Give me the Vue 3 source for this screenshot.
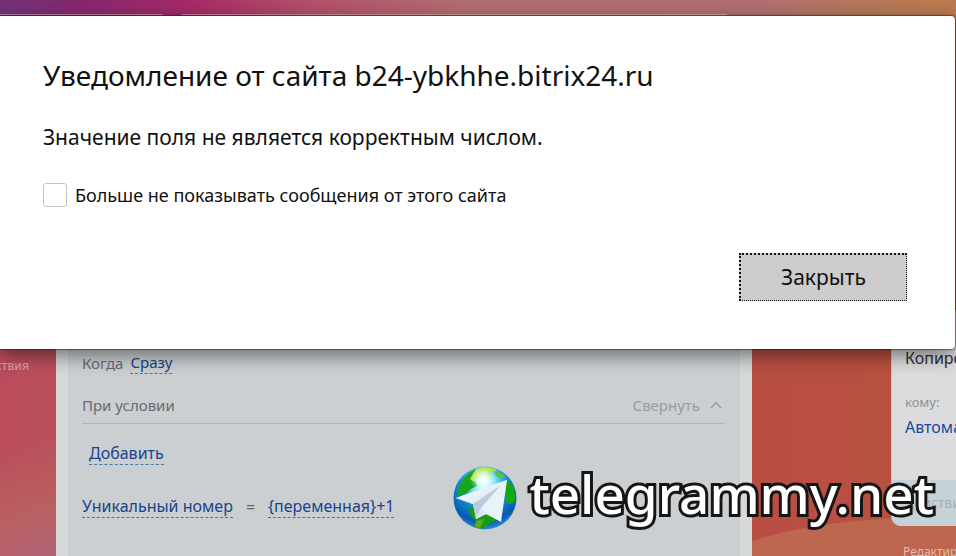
<template>
  <div class="screen">
    <main class="workspace">
      <div class="side-column">
        <span class="side-label">йствия</span>
      </div>

      <section class="robot-panel">
        <div class="robot-form">
          <div class="form-row">
            <span>Когда</span>
            <a href="#" class="dashed-link" @click.prevent>Сразу</a>
          </div>
          <div class="form-row condition-row">
            <span>При условии</span>
            <button class="collapse-btn" type="button" @click="expanded = !expanded">
              Свернуть
              <svg width="12" height="8" viewBox="0 0 12 8" fill="none">
                <path d="M1 7L6 1.5L11 7" stroke="currentColor" stroke-width="1.4" />
              </svg>
            </button>
          </div>
          <div v-if="expanded" class="add-row">
            <a href="#" class="dashed-link" @click.prevent>Добавить</a>
          </div>
          <div class="form-row value-row">
            <a href="#" class="dashed-link" @click.prevent>Уникальный номер</a>
            <span>=</span>
            <a href="#" class="dashed-link" @click.prevent>{переменная}+1</a>
          </div>
        </div>
      </section>

      <div class="next-column">
        <div class="task-card">
          <div class="task-title">Копировать</div>
          <div class="task-label">кому:</div>
          <a href="#" class="task-link" @click.prevent>Автоматически</a>
          <div class="task-footer">действия</div>
        </div>
        <a href="#" class="edit-link" @click.prevent>Редактировать</a>
      </div>
    </main>

    <div v-if="show" class="dialog" role="dialog" aria-labelledby="dialog-title">
      <h1 id="dialog-title" class="dialog-title">Уведомление от сайта b24-ybkhhe.bitrix24.ru</h1>
      <p class="dialog-text">Значение поля не является корректным числом.</p>
      <label class="mute-option" for="mute">
        <input id="mute" v-model="muted" type="checkbox" />
        <span>Больше не показывать сообщения от этого сайта</span>
      </label>
      <div class="dialog-actions">
        <button class="close-btn" type="button" @click="show = false">Закрыть</button>
      </div>
    </div>

    <div class="watermark">
      <svg class="watermark-logo" width="64" height="64" viewBox="0 0 64 64">
        <defs>
          <radialGradient id="sea" cx="0.48" cy="0.28" r="0.75">
            <stop offset="0" stop-color="#f2ffff" />
            <stop offset="0.25" stop-color="#7be4ef" />
            <stop offset="0.5" stop-color="#158fd3" />
            <stop offset="0.8" stop-color="#0756b3" />
            <stop offset="1" stop-color="#3b9bdc" />
          </radialGradient>
          <radialGradient id="shine">
            <stop offset="0" stop-color="#fff" />
            <stop offset="0.4" stop-color="#e8fff0" stop-opacity="0.8" />
            <stop offset="1" stop-color="#bff" stop-opacity="0" />
          </radialGradient>
          <linearGradient id="wing" x1="0" y1="0" x2="1" y2="1">
            <stop offset="0" stop-color="#fff" />
            <stop offset="1" stop-color="#d3e2f4" />
          </linearGradient>
          <clipPath id="globe"><circle cx="32" cy="32" r="31" /></clipPath>
        </defs>
        <circle cx="32" cy="32" r="31.5" fill="url(#sea)" />
        <g clip-path="url(#globe)">
          <path d="M4 28C6 17 13 7 23 3L30 5L27 10L22 14L24 20L18 23L14 27L8 29Z" fill="#18a51b" />
          <path d="M23 3L36 0L44 4L37 7L39 11L29 10L22 16L17 13Z" fill="#b6dc35" />
          <path d="M43 5L53 10L48 12L42 9Z" fill="#55c33d" />
          <path d="M53 13L61 21L63 33L61 37L56 38L52 34L53 25Z" fill="#13a814" />
          <path d="M15 40L25 43L39 47L44 54L36 58L29 63L21 61L23 55L17 49Z" fill="#169c16" />
          <path d="M23 55L31 53L27 62L22 61Z" fill="#5fa81a" />
        </g>
        <circle cx="30" cy="13" r="13" fill="url(#shine)" />
        <path d="M3 32L54 14L48 56L33 48L23 53L20 38Z" fill="#eaf2fb" />
        <path d="M3 32L54 14L20 38Z" fill="url(#wing)" />
        <path d="M20 38L48 19L28 42L23 53Z" fill="#bccbdd" />
        <path d="M28 42L33 48L23 53Z" fill="#dbe6f3" />
      </svg>
      <span>telegrammy.net</span>
    </div>
  </div>
</template>

<script setup>
import { ref } from 'vue'

const show = ref(true)
const muted = ref(false)
const expanded = ref(true)
</script>

<style scoped>
.screen {
  display: grid;
  position: relative;
  min-height: 100vh;
  overflow: hidden;
  font-family: "Noto Sans", "Open Sans", sans-serif;
  background:
    linear-gradient(90deg, rgba(255, 225, 225, 0.5) 17%, transparent 17% 19%, rgba(255, 225, 225, 0.5) 19% 76%, transparent 76%) 0 14px / 100% 1px no-repeat,
    linear-gradient(90deg, #74337a 0%, #86286f 8%, #a72b68 20%, #b2506b 32%, #b36d70 48%, #b27070 80%, #b57957 92%, #bc7b4f 100%) 0 0 / 100% 60px no-repeat,
    radial-gradient(ellipse 230px 46px at 100% 100%, #bd6650 0 98%, transparent 100%),
    radial-gradient(circle at 5% 103%, #ac6281 0, #b96060 70px, transparent 140px),
    linear-gradient(90deg, #bb4c5c, #b9525a 8%, #b84e44 78%, #b8523f 100%);
}

.workspace,
.dialog {
  grid-area: 1 / 1;
}

.workspace {
  display: flex;
  min-width: 0;
  padding-top: 16px;
}

.side-column {
  display: flex;
  justify-content: flex-end;
  width: 56px;
  padding: 341px 27px 0 0;
  box-sizing: border-box;
}

.side-label {
  color: #d99ba1;
  font-size: 12px;
  line-height: 18px;
  font-weight: 500;
}

.robot-panel {
  flex: 1;
  padding: 0 12px;
  background: #d6d9d8;
}

.robot-form {
  min-height: 100%;
  padding: 335px 15px 0 14px;
  box-sizing: border-box;
  background: #cbcfd2;
}

.form-row {
  display: flex;
  align-items: center;
  gap: 7px;
  color: #666b72;
  font-size: 15px;
  line-height: 22px;
}

.dashed-link {
  color: #174489;
  text-decoration: none;
  border-bottom: 1px dashed #4a73a8;
}

.condition-row {
  justify-content: space-between;
  margin-top: 12px;
  padding: 8px 0 7px;
  border-bottom: 1px solid #b0b4b7;
}

.collapse-btn {
  display: flex;
  align-items: center;
  gap: 10px;
  padding: 0 3px 0 0;
  border: none;
  background: none;
  color: #989ca0;
  font: inherit;
  cursor: pointer;
}

.add-row {
  padding: 17px 7px 0;
  font-size: 16px;
  line-height: 24px;
}

.value-row {
  gap: 13px;
  margin-top: 30px;
  font-size: 16px;
}

.next-column {
  width: 204px;
  padding: 294px 0 0 139px;
  box-sizing: border-box;
  overflow: hidden;
  white-space: nowrap;
}

.task-card {
  width: 240px;
  border-left: 1px solid #b6cdd4;
  border-radius: 10px;
  background: #dcdcde;
  overflow: hidden;
}

.task-title,
.task-label,
.task-link {
  display: block;
  padding-left: 13px;
  font-size: 16px;
  line-height: 24px;
}

.task-title {
  padding-top: 36px;
  color: #2c2f34;
}

.task-label {
  padding-top: 22px;
  color: #8c8f94;
  font-size: 13px;
  line-height: 20px;
}

.task-link {
  padding-top: 3px;
  color: #174a9c;
  text-decoration: none;
}

.task-footer {
  margin-top: 41px;
  padding: 12px 14px;
  background: #c5d2d7;
  color: #a3b0b7;
  font-size: 14px;
  line-height: 22px;
}

.edit-link {
  display: block;
  padding: 16px 0 0 12px;
  color: #e5bba8;
  font-size: 12px;
  line-height: 20px;
  text-decoration: none;
}

.dialog {
  align-self: start;
  z-index: 1;
  margin: 16px 1px 0 0;
  padding: 37px 48px 48px 43px;
  border-radius: 0 4px 4px 0;
  background: #fff;
  color: #111;
  box-shadow: 0 0 1px 1px rgba(40, 20, 20, 0.5), 0 6px 20px rgba(0, 0, 0, 0.5);
}

.dialog-title {
  margin: 0;
  font-size: 28px;
  line-height: 44px;
  font-weight: 400;
}

.dialog-text {
  margin: 24px 0 0;
  font-size: 21px;
  line-height: 32px;
}

.mute-option {
  display: flex;
  align-items: center;
  gap: 8px;
  margin-top: 28px;
  font-size: 18px;
  line-height: 28px;
}

.mute-option input {
  appearance: none;
  width: 24px;
  height: 24px;
  margin: 0;
  border: 1px solid #c4c4c4;
  border-radius: 3px;
  background: #fff;
}

.mute-option input:checked {
  background: #6b8fc4;
}

.dialog-actions {
  display: flex;
  justify-content: flex-end;
  margin-top: 44px;
}

.close-btn {
  width: 168px;
  height: 48px;
  padding: 0 0 2px;
  border: 1px dotted #111;
  border-top-width: 2px;
  border-left-width: 2px;
  background: #ccc;
  color: #111;
  font-family: inherit;
  font-size: 21px;
  cursor: pointer;
}

.watermark {
  display: flex;
  align-items: center;
  gap: 12px;
  position: absolute;
  right: 22px;
  bottom: 28px;
  z-index: 2;
  color: #fff;
  font-size: 53px;
  font-weight: 500;
  line-height: 64px;
  -webkit-text-stroke: 6px #151515;
  stroke-linejoin: round;
  paint-order: stroke fill;
  pointer-events: none;
}

.watermark span {
  padding-bottom: 8px;
}

.watermark-logo {
  flex: none;
}
</style>

<style>
body {
  margin: 0;
}
</style>
